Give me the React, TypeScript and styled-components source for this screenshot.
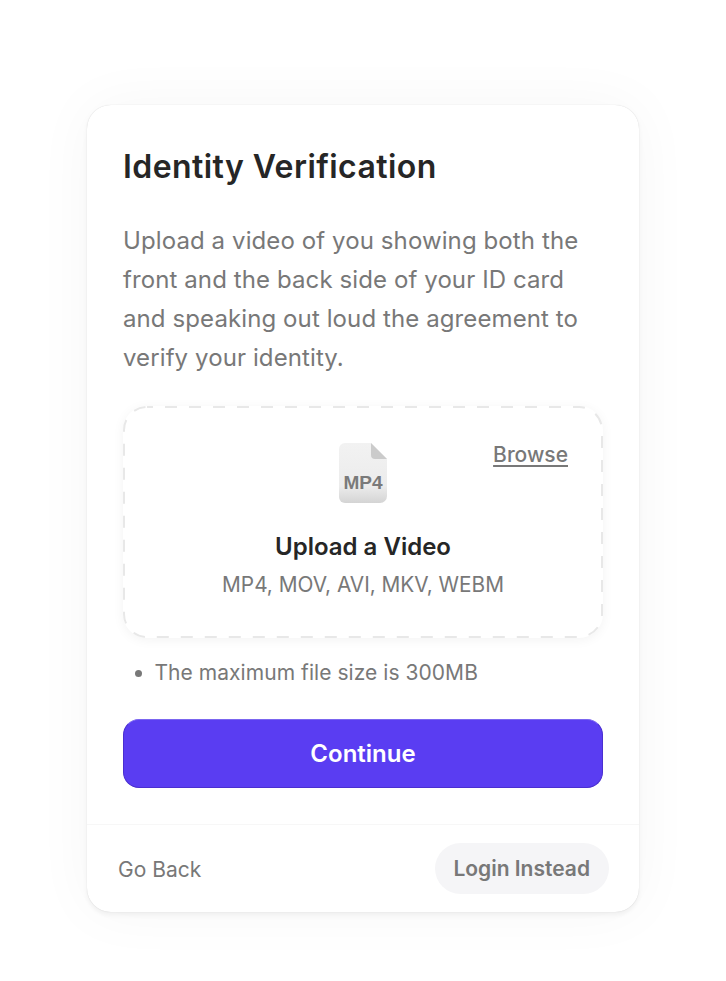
import styled, { createGlobalStyle } from 'styled-components';

const GlobalStyle = createGlobalStyle`
  html, body {
    margin: 0;
    padding: 0;
    background: #ffffff;
    font-family: "Inter", "Liberation Sans", sans-serif;
  }
`;

const Page = styled.main`
  box-sizing: border-box;
  width: 726px;
  height: 981px;
  padding: 105px 87px 0;
  overflow: hidden;
`;

const Card = styled.section`
  box-sizing: border-box;
  width: 552px;
  height: 807px;
  display: flex;
  flex-direction: column;
  background: #ffffff;
  border-radius: 24px;
  box-shadow: 0 0 1px rgba(0, 0, 0, 0.18), 0 3px 5px rgba(0, 0, 0, 0.05), 0 0 60px rgba(0, 0, 0, 0.04);
`;

const Body = styled.div`
  display: flex;
  flex-direction: column;
  padding: 42px 36px 0;
  flex: 1;
`;

const Title = styled.h1`
  margin: 0;
  font-size: 32px;
  line-height: 40px;
  font-weight: 600;
  letter-spacing: 0.43px;
  color: #262626;
`;

const Intro = styled.p`
  margin: 34px 0 0;
  font-size: 24px;
  line-height: 39px;
  font-weight: 400;
  letter-spacing: 0.1px;
  color: #787878;
`;

const DropZone = styled.div`
  position: relative;
  box-sizing: border-box;
  height: 232px;
  margin-top: 29px;
  display: flex;
  flex-direction: column;
  align-items: center;
  padding-top: 36px;
  border-radius: 24px;
  box-shadow: 0 2px 12px rgba(0, 0, 0, 0.05);
`;

const DashedEdge = styled.svg`
  position: absolute;
  inset: 0;
  width: 100%;
  height: 100%;
  pointer-events: none;
`;

const BrowseLink = styled.a`
  position: absolute;
  top: 35px;
  right: 35px;
  font-size: 21px;
  line-height: 28px;
  font-weight: 500;
  color: #787878;
  text-decoration: underline;
  text-underline-offset: 3px;
  text-decoration-thickness: 2px;
`;

const DropTitle = styled.div`
  margin-top: 28px;
  font-size: 24px;
  line-height: 30px;
  font-weight: 600;
  color: #262626;
`;

const DropFormats = styled.div`
  margin-top: 8px;
  font-size: 20.8px;
  line-height: 30px;
  color: #787878;
`;

const Notes = styled.ul`
  margin: 20px 0 0;
  padding: 0 0 0 31.5px;
  font-size: 21px;
  line-height: 30px;
  letter-spacing: 0.05px;
  color: #787878;
`;

const ContinueButton = styled.button`
  box-sizing: border-box;
  height: 69px;
  margin-top: 31px;
  border: 1px solid #4a2fd0;
  border-top-color: #7b66f0;
  border-radius: 16px;
  background: #5a3df2;
  color: #ffffff;
  font-family: inherit;
  font-size: 24px;
  font-weight: 600;
`;

const Footer = styled.footer`
  height: 88px;
  box-sizing: border-box;
  display: flex;
  align-items: center;
  justify-content: space-between;
  padding: 0 30px 0 31px;
  border-top: 1px solid #f7f7f7;
`;

const GoBack = styled.a`
  padding-top: 1px;
  font-size: 21px;
  font-weight: 400;
  color: #787878;
`;

const LoginButton = styled.button`
  height: 51px;
  padding: 0 19px 0 18px;
  border: none;
  border-radius: 26px;
  background: #f5f5f7;
  color: #787878;
  font-family: inherit;
  font-size: 21px;
  font-weight: 600;
`;

const FileIcon = () => (
  <svg width="50" height="62" viewBox="0 0 50 62" role="img" aria-label="MP4 file">
    <defs>
      <linearGradient id="sheet" x1="0" y1="0" x2="0" y2="1">
        <stop offset="0" stopColor="#f2f2f2" />
        <stop offset="0.72" stopColor="#ececec" />
        <stop offset="1" stopColor="#d4d4d4" />
      </linearGradient>
    </defs>
    <path d="M7 1 H33 L49 17 V54 a7 7 0 0 1 -7 7 H7 a6 6 0 0 1 -6 -6 V7 a6 6 0 0 1 6 -6 Z" fill="url(#sheet)" />
    <path d="M33 1 L49 17 H37 a4 4 0 0 1 -4 -4 Z" fill="#cbcbcb" />
    <text x="25" y="47" textAnchor="middle" fontFamily="'Liberation Sans', sans-serif" fontWeight="700" fontSize="19" fill="#7a7a7a">MP4</text>
  </svg>
);

export default function App() {
  return (
    <Page>
      <GlobalStyle />
      <Card>
        <Body>
          <Title>Identity Verification</Title>
          <Intro>
            Upload a video of you showing both the front and the back side of your ID card and speaking out loud the
            agreement to verify your identity.
          </Intro>
          <DropZone>
            <DashedEdge>
              <rect x="1" y="1" width="478" height="230" rx="23" fill="none" stroke="#e8e8e8" strokeWidth="2" strokeDasharray="12 12" strokeDashoffset="6" />
            </DashedEdge>
            <BrowseLink>Browse</BrowseLink>
            <FileIcon />
            <DropTitle>Upload a Video</DropTitle>
            <DropFormats>MP4, MOV, AVI, MKV, WEBM</DropFormats>
          </DropZone>
          <Notes>
            <li>The maximum file size is 300MB</li>
          </Notes>
          <ContinueButton>Continue</ContinueButton>
        </Body>
        <Footer>
          <GoBack>Go Back</GoBack>
          <LoginButton>Login Instead</LoginButton>
        </Footer>
      </Card>
    </Page>
  );
}
